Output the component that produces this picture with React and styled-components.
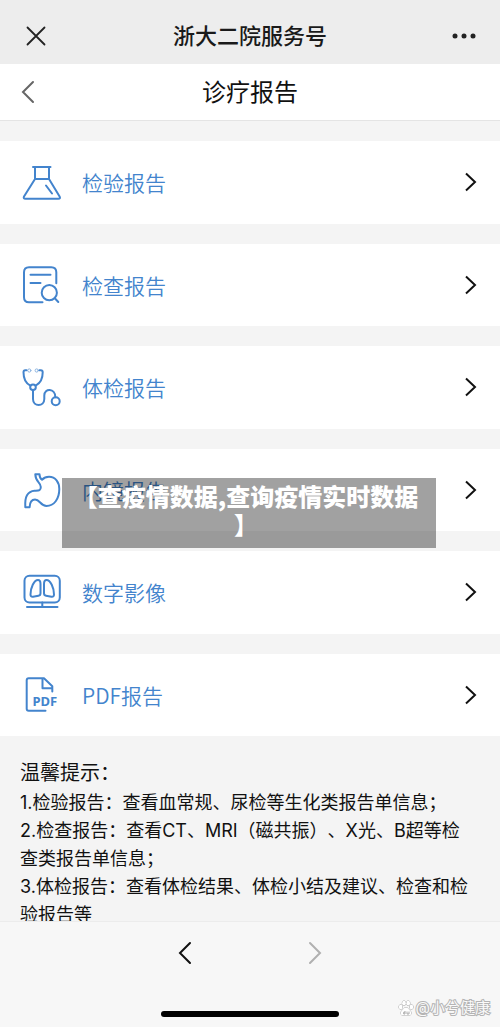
import React from 'react';
import styled, { createGlobalStyle } from 'styled-components';

const GlobalStyle = createGlobalStyle`
  * {
    box-sizing: border-box;
  }

  body {
    margin: 0;
    background: #f4f4f4;
    font-family: Inter, "Noto Sans CJK SC", sans-serif;
  }
`;

// Styled components
const Page = styled.div`
  position: relative;
  display: flex;
  flex-direction: column;
  height: 100vh;
  min-height: 800px;
`;

const Bar = styled.header`
  display: grid;
  grid-template-columns: 72px 1fr 72px;
  align-items: center;
`;

const AppBar = styled(Bar)`
  height: 64px;
  padding-top: 7px;
  background: #ededed;
`;

const NavBar = styled(Bar)`
  height: 57px;
  background: #fff;
  border-bottom: 1px solid #e4e4e4;
`;

const AppTitle = styled.div`
  font-size: 22px;
  line-height: 32px;
  font-weight: 500;
  text-align: center;
  color: #1a1a1a;
`;

const PageTitle = styled.h1`
  margin: 0;
  padding-top: 2px;
  font-size: 24px;
  line-height: 32px;
  font-weight: 400;
  text-align: center;
  color: #111;
`;

const IconButton = styled.button`
  display: flex;
  align-items: center;
  justify-content: center;
  width: ${(props) => props.$width || 72}px;
  height: 40px;
  padding: 0;
  border: 0;
  background: none;
  color: ${(props) => props.$color || '#222'};
`;

const Main = styled.main`
  flex: 1;
  min-height: 0;
  display: flex;
  flex-direction: column;
`;

const ReportList = styled.ul`
  flex: 1;
  display: flex;
  flex-direction: column;
  gap: 20px;
  margin: 0;
  padding: 20px 0 0;
  list-style: none;
`;

const ReportItem = styled.li`
  flex: 1;
  display: flex;
  background: #fff;
`;

const ReportLink = styled.a`
  flex: 1;
  display: flex;
  align-items: center;
  gap: 20px;
  padding: 0 22px;
  color: #4384cd;
  text-decoration: none;
`;

const ReportIcon = styled.svg`
  flex: none;
  width: 40px;
  height: 40px;
  fill: none;
  stroke: #4384cd;
  stroke-width: 2;
  stroke-linecap: round;
  stroke-linejoin: round;
`;

const IconText = styled.text`
  font: 700 13px "Noto Sans", sans-serif;
  fill: #4384cd;
  stroke: none;
`;

const ReportName = styled.span`
  flex: 1;
  font-family: "Noto Sans CJK SC", sans-serif;
  font-size: 21px;
  line-height: 30px;
  font-weight: 350;
`;

const Arrow = styled.svg`
  width: 14px;
  height: 20px;
  fill: none;
  stroke: #111;
  stroke-width: 2;
`;

const Tips = styled.section`
  flex: 0 0 185px;
  padding: 21px 24px 0 20px;
  overflow-y: auto;
  scrollbar-width: none;
  color: #111;
`;

const TipsTitle = styled.h2`
  margin: 0;
  font-size: 20px;
  line-height: 32px;
  font-weight: 400;
`;

const Tip = styled.p`
  margin: 0;
  font-size: 18px;
  line-height: 28px;
  text-spacing-trim: space-all;
`;

const Footer = styled.footer`
  display: flex;
  flex-direction: column;
  align-items: center;
  justify-content: space-between;
  height: 106px;
  padding: 11px 0 10px;
  background: #f7f7f7;
  border-top: 1px solid #ececec;
`;

const FooterNav = styled.nav`
  display: flex;
  gap: 90px;
`;

const HomeIndicator = styled.div`
  width: 178px;
  height: 6px;
  border-radius: 3px;
  background: #000;
`;

const Caption = styled.div`
  position: absolute;
  top: 478px;
  left: 62px;
  right: 64px;
  height: 70px;
  padding: 4px 14px 4px 8px;
  background: rgba(0, 0, 0, 0.37);
  color: #fff;
  font-family: "Noto Sans CJK SC", sans-serif;
  font-size: 24px;
  line-height: 28px;
  font-weight: 900;
  text-align: center;
  text-spacing-trim: space-all;
`;

const Watermark = styled.div`
  position: absolute;
  right: 10px;
  bottom: 8px;
  display: flex;
  align-items: center;
  gap: 2px;
  font-size: 15px;
  line-height: 22px;
  color: #fafafa;
  -webkit-text-stroke: 2px #b4b4b4;
  paint-order: stroke fill;
`;

const Paw = styled.svg`
  width: 16px;
  height: 16px;
  fill: #fff;
  stroke: #aaa;
  stroke-width: 1;
`;

// Icons
const FlaskIcon = () => (
  <ReportIcon viewBox="0 0 40 40">
    <path d="M11 5h17.5M13 5v12M27 5v12M13 17h14M13 17L2 34.5q-1 2.3 1.5 2.3h32.8q2.5 0 1.3-2.3L27 17M24 23.5l6 8" />
  </ReportIcon>
);

const SearchDocIcon = () => (
  <ReportIcon viewBox="0 0 40 40">
    <path d="M20.5 37.3H7q-5 0-5-5V7.3q0-5 5-5h22.3q5 0 5 5v11M8.5 9.7h20M8.5 18h10" />
    <circle cx="27.3" cy="27.7" r="7.6" />
    <path d="M32.8 33.3l3.5 3.7" />
  </ReportIcon>
);

const StethoscopeIcon = () => (
  <ReportIcon viewBox="0 0 40 40">
    <g strokeWidth="1" opacity="0.6">
      <circle cx="7.3" cy="3.5" r="1.6" />
      <circle cx="14.7" cy="3.5" r="1.6" />
    </g>
    <path d="M4.5 3.3H3.2q-1.7 0-1.7 2C1.5 11 3.5 16 8 18.4M17.5 3.3h1.3q1.9 0 1.9 2C20.7 11 18.5 16 14 18.4" />
    <circle cx="11" cy="20.3" r="2.8" />
    <path d="M11 23.3V32c0 8 11.3 8 11.3 0v-3.5c0-7.5 11-7.5 11 1.7" />
    <circle cx="33.7" cy="34.3" r="4" />
  </ReportIcon>
);

const StomachIcon = () => (
  <ReportIcon viewBox="0 0 40 40">
    <path d="M13.3 4.2h4.200c0 2.200.8 4.300 2.500 5.600C22 7.700 24 6.800 27 6.800c6.500 0 10.300 5.200 10.300 12.200C37.300 29 32 36 24.500 36c-6 0-6.500-6.500-11.500-6.500-4.500 0-5.200 3.500-5.400 7.700H3.300c-.3-5-.1-9 1.700-12 1.700-2.800 4.200-4.300 7.500-4.500 4.200-.2 6.300.2 6.300-3.700 0-5-5.300-4.600-5.500-12.800z" />
  </ReportIcon>
);

const ImagingIcon = () => (
  <ReportIcon viewBox="0 0 40 40">
    <rect x="2.5" y="3.7" width="35.3" height="26.8" rx="5" />
    <path d="M20.3 30.5v4.5M5 35h30.5" />
    <path d="M16 8c-4 0-7.5 8-7.5 14.5q0 2.5 2.5 2.2l5.5-.9q2-.3 2-2.5V12q0-4-2.5-4z" />
    <path d="M24.5 8c4 0 7.5 8 7.5 14.5q0 2.5-2.5 2.2l-5.5-.9q-2-.3-2-2.5V12q0-4 2.5-4z" />
  </ReportIcon>
);

const PdfIcon = () => (
  <ReportIcon viewBox="0 0 40 40">
    <path d="M23.5 35.7H6.7q-2 0-2-2V5.3q0-2 2-2H22l8.3 8v5.2M20.5 3.5v9.8h9.5" />
    <IconText x="10.5" y="30.5">PDF</IconText>
  </ReportIcon>
);

const Chevron = ({ next }) => (
  <svg width="14" height="24" viewBox="0 0 14 24" fill="none" stroke="currentColor" strokeWidth="2" strokeLinecap="round">
    <path d={next ? 'M2 2l10 10L2 22' : 'M12 2L2 12l10 10'} />
  </svg>
);

const reports = [
  { name: '检验报告', Icon: FlaskIcon },
  { name: '检查报告', Icon: SearchDocIcon },
  { name: '体检报告', Icon: StethoscopeIcon },
  { name: '内镜报告', Icon: StomachIcon },
  { name: '数字影像', Icon: ImagingIcon },
  { name: 'PDF报告', Icon: PdfIcon },
];

const tips = [
  '1.检验报告：查看血常规、尿检等生化类报告单信息；',
  '2.检查报告：查看CT、MRI（磁共振）、X光、B超等检查类报告单信息；',
  '3.体检报告：查看体检结果、体检小结及建议、检查和检验报告等',
];

// Component
const App = () => {
  return (
    <Page lang="zh-CN">
      <GlobalStyle />
      <AppBar>
        <IconButton aria-label="关闭">
          <svg width="20" height="20" viewBox="0 0 20 20" stroke="currentColor" strokeWidth="1.8" strokeLinecap="round">
            <path d="M1.5 1.5l17 17M18.5 1.5l-17 17" />
          </svg>
        </IconButton>
        <AppTitle>浙大二院服务号</AppTitle>
        <IconButton aria-label="更多">
          <svg width="24" height="6" viewBox="0 0 24 6" fill="currentColor">
            <circle cx="3" cy="3" r="2.5" />
            <circle cx="12" cy="3" r="2.5" />
            <circle cx="21" cy="3" r="2.5" />
          </svg>
        </IconButton>
      </AppBar>
      <NavBar>
        <IconButton aria-label="返回" $width={56} $color="#666">
          <Chevron />
        </IconButton>
        <PageTitle>诊疗报告</PageTitle>
      </NavBar>
      <Main>
        <ReportList>
          {reports.map(({ name, Icon }) => (
            <ReportItem key={name}>
              <ReportLink href="#">
                <Icon />
                <ReportName>{name}</ReportName>
                <Arrow viewBox="0 0 14 20">
                  <path d="M2 1.5l9 8.5-9 8.5" />
                </Arrow>
              </ReportLink>
            </ReportItem>
          ))}
        </ReportList>
        <Tips>
          <TipsTitle>温馨提示：</TipsTitle>
          {tips.map((tip) => (
            <Tip key={tip}>{tip}</Tip>
          ))}
        </Tips>
      </Main>
      <Footer>
        <FooterNav>
          <IconButton aria-label="后退" $width={40} $color="#111">
            <Chevron />
          </IconButton>
          <IconButton aria-label="前进" $width={40} $color="#b0b0b0">
            <Chevron next />
          </IconButton>
        </FooterNav>
        <HomeIndicator />
      </Footer>
      <Caption>
        【查疫情数据,查询疫情实时数据
        <br />】
      </Caption>
      <Watermark>
        <Paw viewBox="0 0 16 16">
          <ellipse cx="2.7" cy="7" rx="1.8" ry="2.3" />
          <ellipse cx="6" cy="3.2" rx="1.8" ry="2.4" />
          <ellipse cx="10.2" cy="3.2" rx="1.8" ry="2.4" />
          <ellipse cx="13.4" cy="7" rx="1.8" ry="2.3" />
          <path d="M8 7.5c2 0 2.7 2 4.3 3.5 2 2 .7 4.5-1.5 4.3-1.8-.2-3.8-.2-5.6 0-2.2.2-3.500-2.300-1.500-4.300C5.300 9.500 6 7.500 8 7.500z" />
          <path d="M7 11v3H5.700v-1.800H7M9 11.500V14h2v-2.500" fill="none" />
        </Paw>
        @小兮健康
      </Watermark>
    </Page>
  );
};

export default App;
